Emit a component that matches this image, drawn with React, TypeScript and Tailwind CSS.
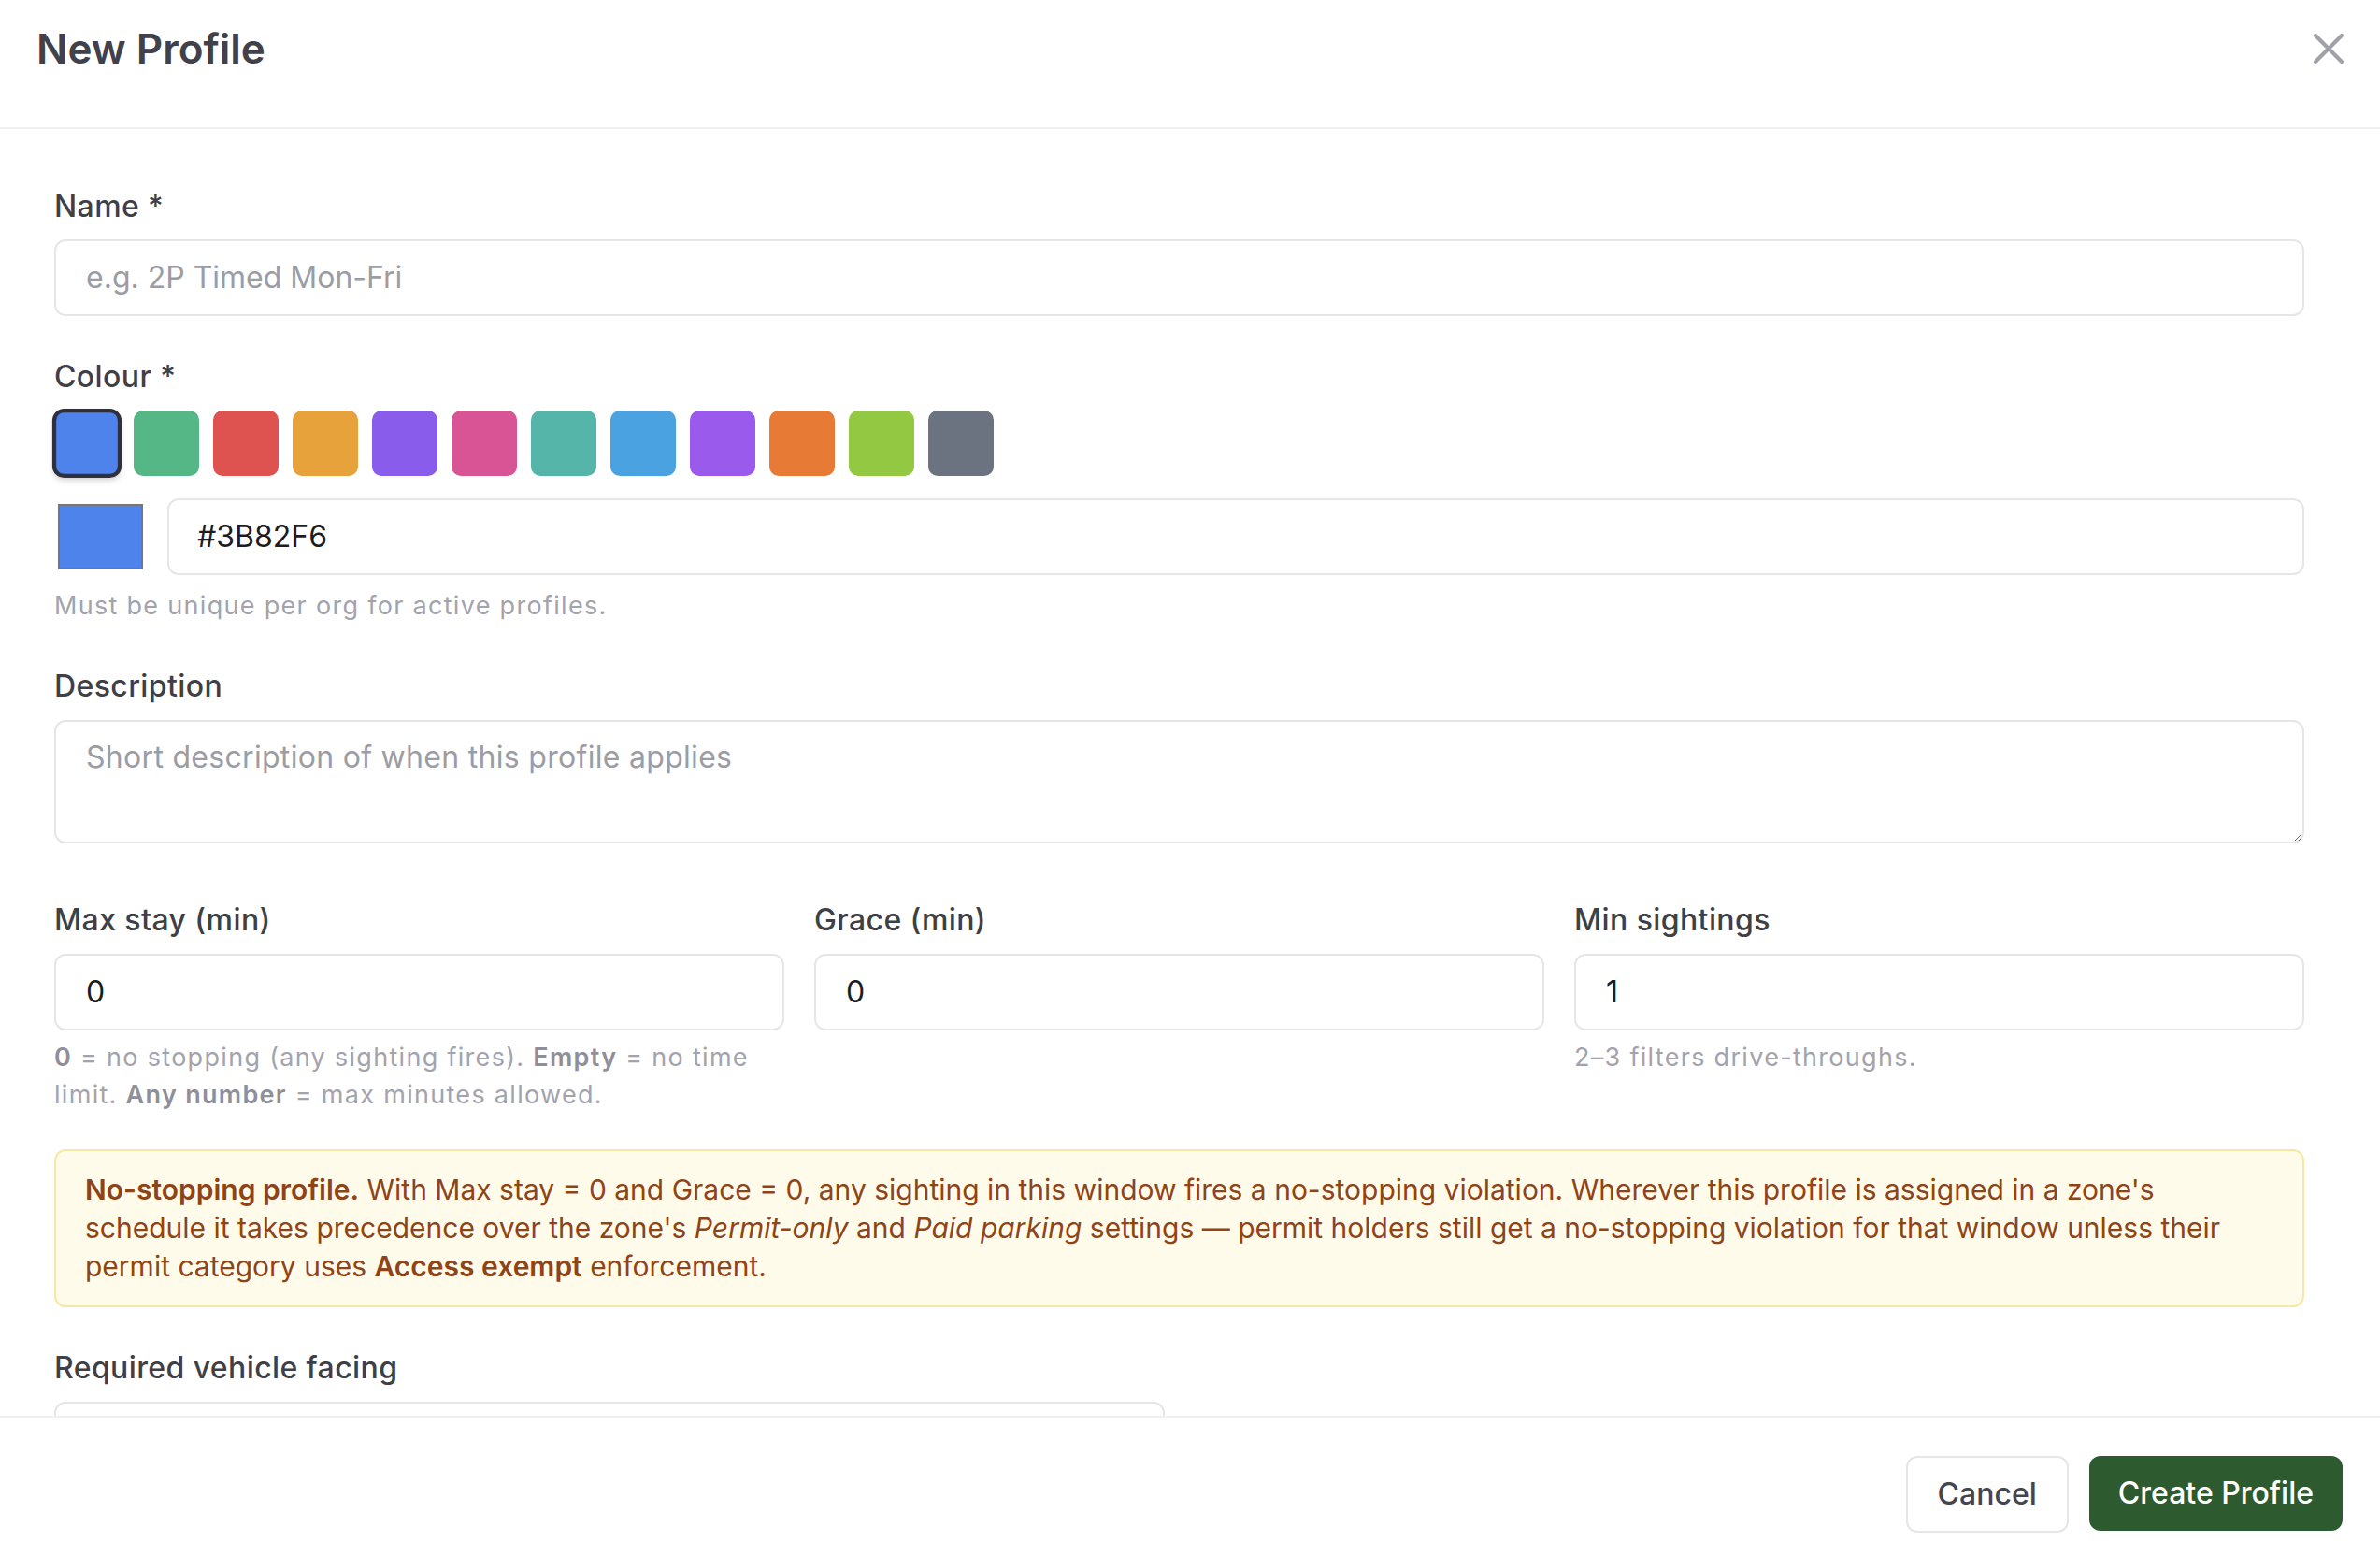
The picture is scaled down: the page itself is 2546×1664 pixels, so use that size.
import React from "react";

const swatches = [
  "#4f83ec",
  "#55b686",
  "#de524f",
  "#e8a23b",
  "#8a5cec",
  "#d95495",
  "#55b5a8",
  "#4aa3e0",
  "#9a5aeb",
  "#e77b35",
  "#93c843",
  "#6b7280",
];

function Label({ children, className = "" }: { children: React.ReactNode; className?: string }) {
  return (
    <div className={"text-[32px] tracking-[0.4px] leading-[40px] font-medium text-[#3f3f46] " + className}>
      {children}
    </div>
  );
}

export default function App() {
  return (
    <div className="w-[2546px] h-[1664px] flex flex-col bg-white overflow-hidden font-['Inter','Noto_Sans',sans-serif]">
      {/* Header */}
      <div className="h-[138px] shrink-0 border-b-2 border-[#f0f0f2] flex items-start justify-between pl-[39px] pr-[27px] pt-[26px]">
        <h1 className="text-[44px] leading-[52px] font-semibold text-[#41414b]">New Profile</h1>
        <svg
          className="-mt-[2px]"
          width="56"
          height="56"
          viewBox="0 0 24 24"
          fill="none"
          stroke="#a1a1aa"
          strokeWidth="1.75"
          strokeLinecap="round"
        >
          <path d="M18 6 6 18" />
          <path d="m6 6 12 12" />
        </svg>
      </div>

      {/* Body */}
      <div className="flex-1 overflow-hidden pl-[58px] pr-[81px] pt-[63px]">
        <Label>Name *</Label>
        <div className="mt-[15px] h-[82px] rounded-[12px] border-2 border-[#e6e6e9] px-[32px] flex items-center text-[32px] text-[#9c9ca4]">
          e.g. 2P Timed Mon-Fri
        </div>

        <Label className="mt-[45px]">Colour *</Label>
        <div className="mt-[16px] flex items-center gap-[15px]">
          {swatches.map((c, i) => (
            <div
              key={c}
              className={
                i === 0
                  ? "w-[70px] h-[70px] rounded-[12px] border-4 border-[#30303c] scale-[1.06] shadow-md"
                  : "w-[70px] h-[70px] rounded-[10px]"
              }
              style={{ backgroundColor: c }}
            />
          ))}
        </div>

        <div className="mt-[24px] flex items-center gap-[26px]">
          <div className="ml-[4px] w-[91px] h-[70px] border-2 border-[#75757d] bg-[#4f83ec]" />
          <div className="flex-1 h-[82px] rounded-[12px] border-2 border-[#e6e6e9] px-[30px] flex items-center text-[32px] text-[#1c1c22]">
            #3B82F6
          </div>
        </div>
        <div className="mt-[13px] text-[27px] tracking-[1.3px] leading-[40px] text-[#a3a3ad]">
          Must be unique per org for active profiles.
        </div>

        <Label className="mt-[46px]">Description</Label>
        <textarea
          readOnly
          placeholder="Short description of when this profile applies"
          className="block mt-[16px] w-full h-[132px] rounded-[12px] border-2 border-[#e6e6e9] px-[32px] pt-[18px] text-[32px] tracking-[0.3px] leading-[40px] text-[#1c1c22] placeholder:text-[#9c9ca4] outline-none resize-y"
        />

        <div className="mt-[62px] grid grid-cols-3 gap-x-[32px]">
          <div>
            <Label>Max stay (min)</Label>
            <div className="mt-[16px] h-[82px] rounded-[12px] border-2 border-[#e6e6e9] px-[32px] flex items-center text-[32px] text-[#1c1c22]">
              0
            </div>
            <div className="mt-[9px] text-[27px] tracking-[1.3px] leading-[40px] text-[#a3a3ad]">
              <span className="font-semibold text-[#8f8f99]">0</span> = no stopping (any sighting fires).{" "}
              <span className="font-semibold text-[#8f8f99]">Empty</span> = no time
              <br />
              limit. <span className="font-semibold text-[#8f8f99]">Any number</span> = max minutes allowed.
            </div>
          </div>
          <div>
            <Label>Grace (min)</Label>
            <div className="mt-[16px] h-[82px] rounded-[12px] border-2 border-[#e6e6e9] px-[32px] flex items-center text-[32px] text-[#1c1c22]">
              0
            </div>
          </div>
          <div>
            <Label>Min sightings</Label>
            <div className="mt-[16px] h-[82px] rounded-[12px] border-2 border-[#e6e6e9] px-[32px] flex items-center text-[32px] text-[#1c1c22]">
              1
            </div>
            <div className="mt-[9px] text-[27px] tracking-[1.3px] leading-[40px] text-[#a3a3ad]">
              2–3 filters drive-throughs.
            </div>
          </div>
        </div>

        <div className="mt-[38px] rounded-[12px] border-2 border-[#f6e7a4] bg-[#fefbea] px-[31px] py-[21px] text-[30px] leading-[41px] text-[#8f4417] whitespace-nowrap">
          <span className="font-semibold">No-stopping profile.</span> With Max stay = 0 and Grace = 0, any sighting in
          this window fires a no-stopping violation. Wherever this profile is assigned in a zone's
          <br />
          schedule it takes precedence over the zone's <i>Permit-only</i> and <i>Paid parking</i> settings — permit
          holders still get a no-stopping violation for that window unless their
          <br />
          permit category uses <span className="font-semibold">Access exempt</span> enforcement.
        </div>

        <Label className="mt-[45px]">Required vehicle facing</Label>
        <div className="mt-[16px] grid grid-cols-2 gap-x-[32px]">
          <div className="h-[82px] rounded-[12px] border-2 border-[#e6e6e9]" />
        </div>
      </div>

      {/* Footer */}
      <div className="h-[150px] shrink-0 border-t-2 border-[#f0f0f2] flex justify-end items-start gap-[22px] pr-[40px] pt-[41px]">
        <button className="h-[82px] px-[32px] rounded-[12px] border-2 border-[#e6e6e9] bg-white text-[32px] font-medium text-[#45454f]">
          Cancel
        </button>
        <button className="h-[80px] px-[31px] rounded-[12px] bg-[#2d5a2f] text-[32px] font-medium text-white">
          Create Profile
        </button>
      </div>
    </div>
  );
}
